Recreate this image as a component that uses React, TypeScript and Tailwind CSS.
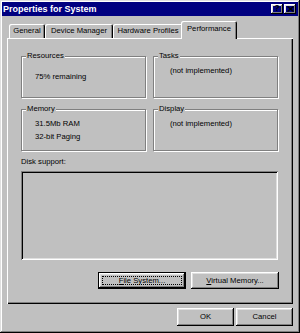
import type { ReactNode } from 'react'

const bevel =
  'shadow-[inset_-1px_-1px_0_#000,inset_1px_1px_0_#fff,inset_-2px_-2px_0_#808080,inset_2px_2px_0_#dfdfdf]'

function Tab({ label, width, selected }: { label: string; width: string; selected?: boolean }) {
  if (selected) {
    return (
      <div
        className={`${width} relative z-10 -mx-[2px] -mb-px flex h-[18px] items-start justify-center rounded-t-[2px] bg-[#c0c0c0] pt-[3px] leading-[10px] shadow-[inset_1px_1px_0_#fff,inset_-1px_0_0_#000,inset_-2px_0_0_#808080]`}
      >
        {label}
      </div>
    )
  }
  return (
    <div
      className={`${width} flex h-[14px] items-start justify-center rounded-t-[2px] pt-[2px] leading-[10px] shadow-[inset_1px_1px_0_#fff,inset_-1px_0_0_#000,inset_-2px_0_0_#808080]`}
    >
      {label}
    </div>
  )
}

function Group({ label, className, children }: { label: string; className: string; children: ReactNode }) {
  return (
    <div className={`relative h-[42px] border border-[#808080] shadow-[inset_1px_1px_0_#fff,1px_1px_0_#fff] ${className}`}>
      <span className="absolute -top-[6px] left-[4px] bg-[#c0c0c0] px-[1px] leading-[10px]">{label}</span>
      {children}
    </div>
  )
}

function Button({ children, width, isDefault }: { children: ReactNode; width: string; isDefault?: boolean }) {
  if (isDefault) {
    return (
      <div className={`${width} h-[17px] border border-black`}>
        <div className={`flex h-full items-center justify-center p-[3px] ${bevel}`}>
          <div className="flex h-full w-full items-center justify-center border border-dotted border-black leading-[10px]">
            {children}
          </div>
        </div>
      </div>
    )
  }
  return (
    <div className={`${width} flex items-center justify-center leading-[10px] ${bevel}`}>
      {children}
    </div>
  )
}

export default function App() {
  return (
    <div className="flex h-[333px] w-[300px] flex-col bg-[#c0c0c0] p-[2px] font-['Liberation_Sans',Arial,sans-serif] text-[7.7px] text-black shadow-[inset_-1px_-1px_0_#000,inset_1px_1px_0_#dfdfdf,inset_-2px_-2px_0_#808080,inset_2px_2px_0_#fff]">
      {/* title bar */}
      <div className="flex h-[14px] items-center justify-between bg-[#000080] pl-[1px] pr-[2px]">
        <span className="text-[9px] font-bold leading-none text-white">Properties for System</span>
        <div className="flex gap-[1px]">
          <div className={`flex h-[10px] w-[12px] items-center justify-center pb-[1px] text-[9px] font-bold leading-none ${bevel}`}>
            ?
          </div>
          <div className={`flex h-[10px] w-[12px] items-center justify-center ${bevel}`}>
            <svg width="7" height="6" viewBox="0 0 7 6">
              <path d="M0.5 0.5 L6.5 5.5 M6.5 0.5 L0.5 5.5" stroke="#000" strokeWidth="1.5" />
            </svg>
          </div>
        </div>
      </div>

      <div className="mt-[5px] px-[5px]">
        {/* tabs */}
        <div className="flex h-[17px] items-end pl-[2px]">
          <Tab label="General" width="w-[36px]" />
          <Tab label="Device Manager" width="w-[68px]" />
          <Tab label="Hardware Profiles" width="w-[70px]" />
          <Tab label="Performance" width="w-[56px]" selected />
        </div>

        {/* panel */}
        <div className="h-[266px] pl-[14px] pt-[18px] shadow-[inset_1px_1px_0_#fff,inset_-1px_-1px_0_#000,inset_-2px_-2px_0_#808080]">
          <div className="grid grid-cols-[125px_125px] gap-x-[7px] gap-y-[11px]">
            <Group label="Resources" className="pl-[13px] pt-[15px]">
              <div className="leading-[10px]">75% remaining</div>
            </Group>
            <Group label="Tasks" className="pl-[16px] pt-[9px]">
              <div className="leading-[10px]">(not implemented)</div>
            </Group>
            <Group label="Memory" className="pl-[13px] pt-[7px]">
              <div className="leading-[13px]">31.5Mb RAM</div>
              <div className="leading-[13px]">32-bit Paging</div>
            </Group>
            <Group label="Display" className="pl-[16px] pt-[9px]">
              <div className="leading-[10px]">(not implemented)</div>
            </Group>
          </div>

          <div className="mt-[6px] leading-[10px]">Disk support:</div>
          <div className="mt-[4px] h-[89px] w-[257px] shadow-[inset_1px_1px_0_#808080,inset_-1px_-1px_0_#fff,inset_2px_2px_0_#000,inset_-2px_-2px_0_#dfdfdf]" />

          <div className="mt-[12px] flex w-[258px] justify-end gap-[5px]">
            <Button width="w-[88px]" isDefault>
              <span>
                <span className="underline">F</span>ile System...
              </span>
            </Button>
            <div className="flex h-[17px]">
              <Button width="w-[88px]">
                <span>
                  <span className="underline">V</span>irtual Memory...
                </span>
              </Button>
            </div>
          </div>
        </div>

        {/* dialog buttons */}
        <div className="mt-[4px] flex h-[18px] justify-end gap-[2px]">
          <Button width="w-[57px]">OK</Button>
          <Button width="w-[57px]">Cancel</Button>
        </div>
      </div>
    </div>
  )
}
